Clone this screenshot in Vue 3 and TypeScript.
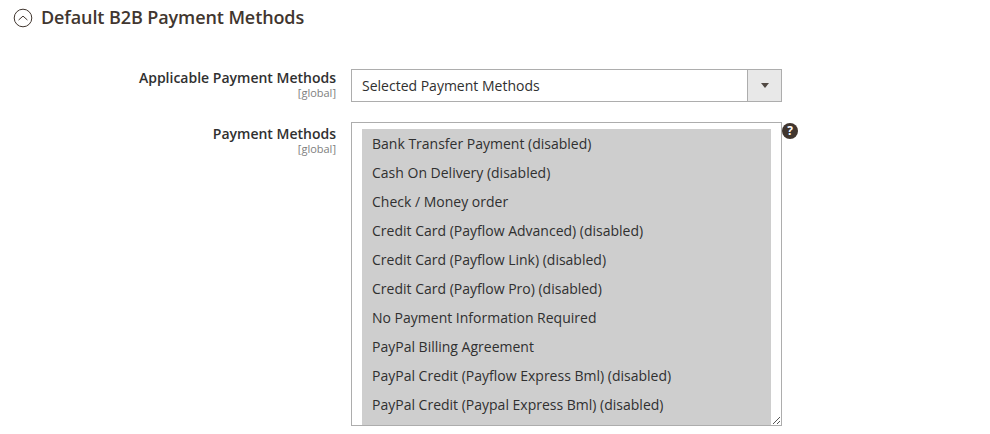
<script setup lang="ts">
const methods: string[] = [
  "Bank Transfer Payment (disabled)",
  "Cash On Delivery (disabled)",
  "Check / Money order",
  "Credit Card (Payflow Advanced) (disabled)",
  "Credit Card (Payflow Link) (disabled)",
  "Credit Card (Payflow Pro) (disabled)",
  "No Payment Information Required",
  "PayPal Billing Agreement",
  "PayPal Credit (Payflow Express Bml) (disabled)",
  "PayPal Credit (Paypal Express Bml) (disabled)",
];
</script>

<template>
  <section class="config">
    <header class="config__head">
      <svg class="config__toggle" width="20" height="20" viewBox="0 0 20 20" aria-hidden="true">
        <circle cx="10" cy="10" r="8.8" fill="none" stroke="#41362f" stroke-width="1" />
        <path d="M5.6 12 L10 8.1 L14.4 12" fill="none" stroke="#41362f" stroke-width="1" />
      </svg>
      <h2 class="config__title">Default B2B Payment Methods</h2>
    </header>

    <div class="row row--first">
      <div class="row__label">
        <span class="row__name">Applicable Payment Methods</span>
        <span class="row__scope">[global]</span>
      </div>
      <div class="select">
        <span class="select__value">Selected Payment Methods</span>
        <span class="select__btn"><i class="select__arrow" /></span>
      </div>
    </div>

    <div class="row row--second">
      <div class="row__label">
        <span class="row__name">Payment Methods</span>
        <span class="row__scope">[global]</span>
      </div>
      <div class="list">
        <ul class="list__items">
          <li v-for="m in methods" :key="m" class="list__item">{{ m }}</li>
        </ul>
        <svg class="list__grip" width="9" height="9" viewBox="0 0 9 9" aria-hidden="true">
          <path d="M1 8 L8 1 M5 8 L8 5" stroke="#555" stroke-width="1" fill="none" />
        </svg>
      </div>
      <span class="help">?</span>
    </div>
  </section>
</template>

<style scoped>
.config {
  width: 990px;
  height: 434px;
  overflow: hidden;
  box-sizing: border-box;
  padding-top: 5px;
  background: #fff;
  color: #303030;
  font-family: "Open Sans", "Liberation Sans", sans-serif;
}

.config__head {
  display: flex;
  align-items: center;
  gap: 8px;
  height: 24px;
  padding-left: 13px;
}

.config__toggle {
  flex: none;
  margin-top: 2px;
}

.config__title {
  margin: 0;
  font-size: 18px;
  font-weight: 600;
  line-height: 24px;
  letter-spacing: -0.1px;
  color: #41362f;
}

.row {
  display: flex;
  align-items: flex-start;
}

.row--first {
  margin-top: 40px;
}

.row--second {
  margin-top: 20px;
}

.row__label {
  flex: none;
  display: flex;
  flex-direction: column;
  align-items: flex-end;
  width: 336px;
  margin-right: 15px;
}

.row__name {
  font-size: 14px;
  font-weight: 600;
  line-height: 18px;
  color: #303030;
}

.row--second .row__name {
  margin-top: 3px;
}

.row__scope {
  font-size: 11px;
  line-height: 12px;
  color: #808080;
}

.select {
  display: flex;
  justify-content: space-between;
  box-sizing: border-box;
  width: 431px;
  height: 33px;
  border: 1px solid #adadad;
  background: #fff;
}

.select__value {
  padding-left: 10px;
  font-size: 14px;
  line-height: 31px;
  color: #303030;
}

.select__btn {
  display: flex;
  align-items: center;
  justify-content: center;
  width: 33px;
  border-left: 1px solid #adadad;
  background: #e8e8e8;
}

.select__arrow {
  width: 0;
  height: 0;
  border-top: 5px solid #514943;
  border-left: 4px solid transparent;
  border-right: 4px solid transparent;
}

.list {
  position: relative;
  flex: none;
  box-sizing: border-box;
  width: 431px;
  height: 304px;
  padding: 6px 10px 0;
  border: 1px solid #adadad;
  background: #fff;
}

.list__items {
  margin: 0;
  padding: 0;
  height: 296px;
  list-style: none;
  background: #cecece;
}

.list__item {
  height: 29px;
  padding-left: 10px;
  font-size: 14px;
  line-height: 29px;
  color: #303030;
  white-space: nowrap;
}

.list__grip {
  position: absolute;
  right: 0;
  bottom: 0;
}

.help {
  flex: none;
  width: 16px;
  height: 16px;
  margin-top: 1px;
  border-radius: 50%;
  background: #41362f;
  color: #fff;
  font-size: 12px;
  font-weight: 700;
  line-height: 16px;
  text-align: center;
}
</style>
